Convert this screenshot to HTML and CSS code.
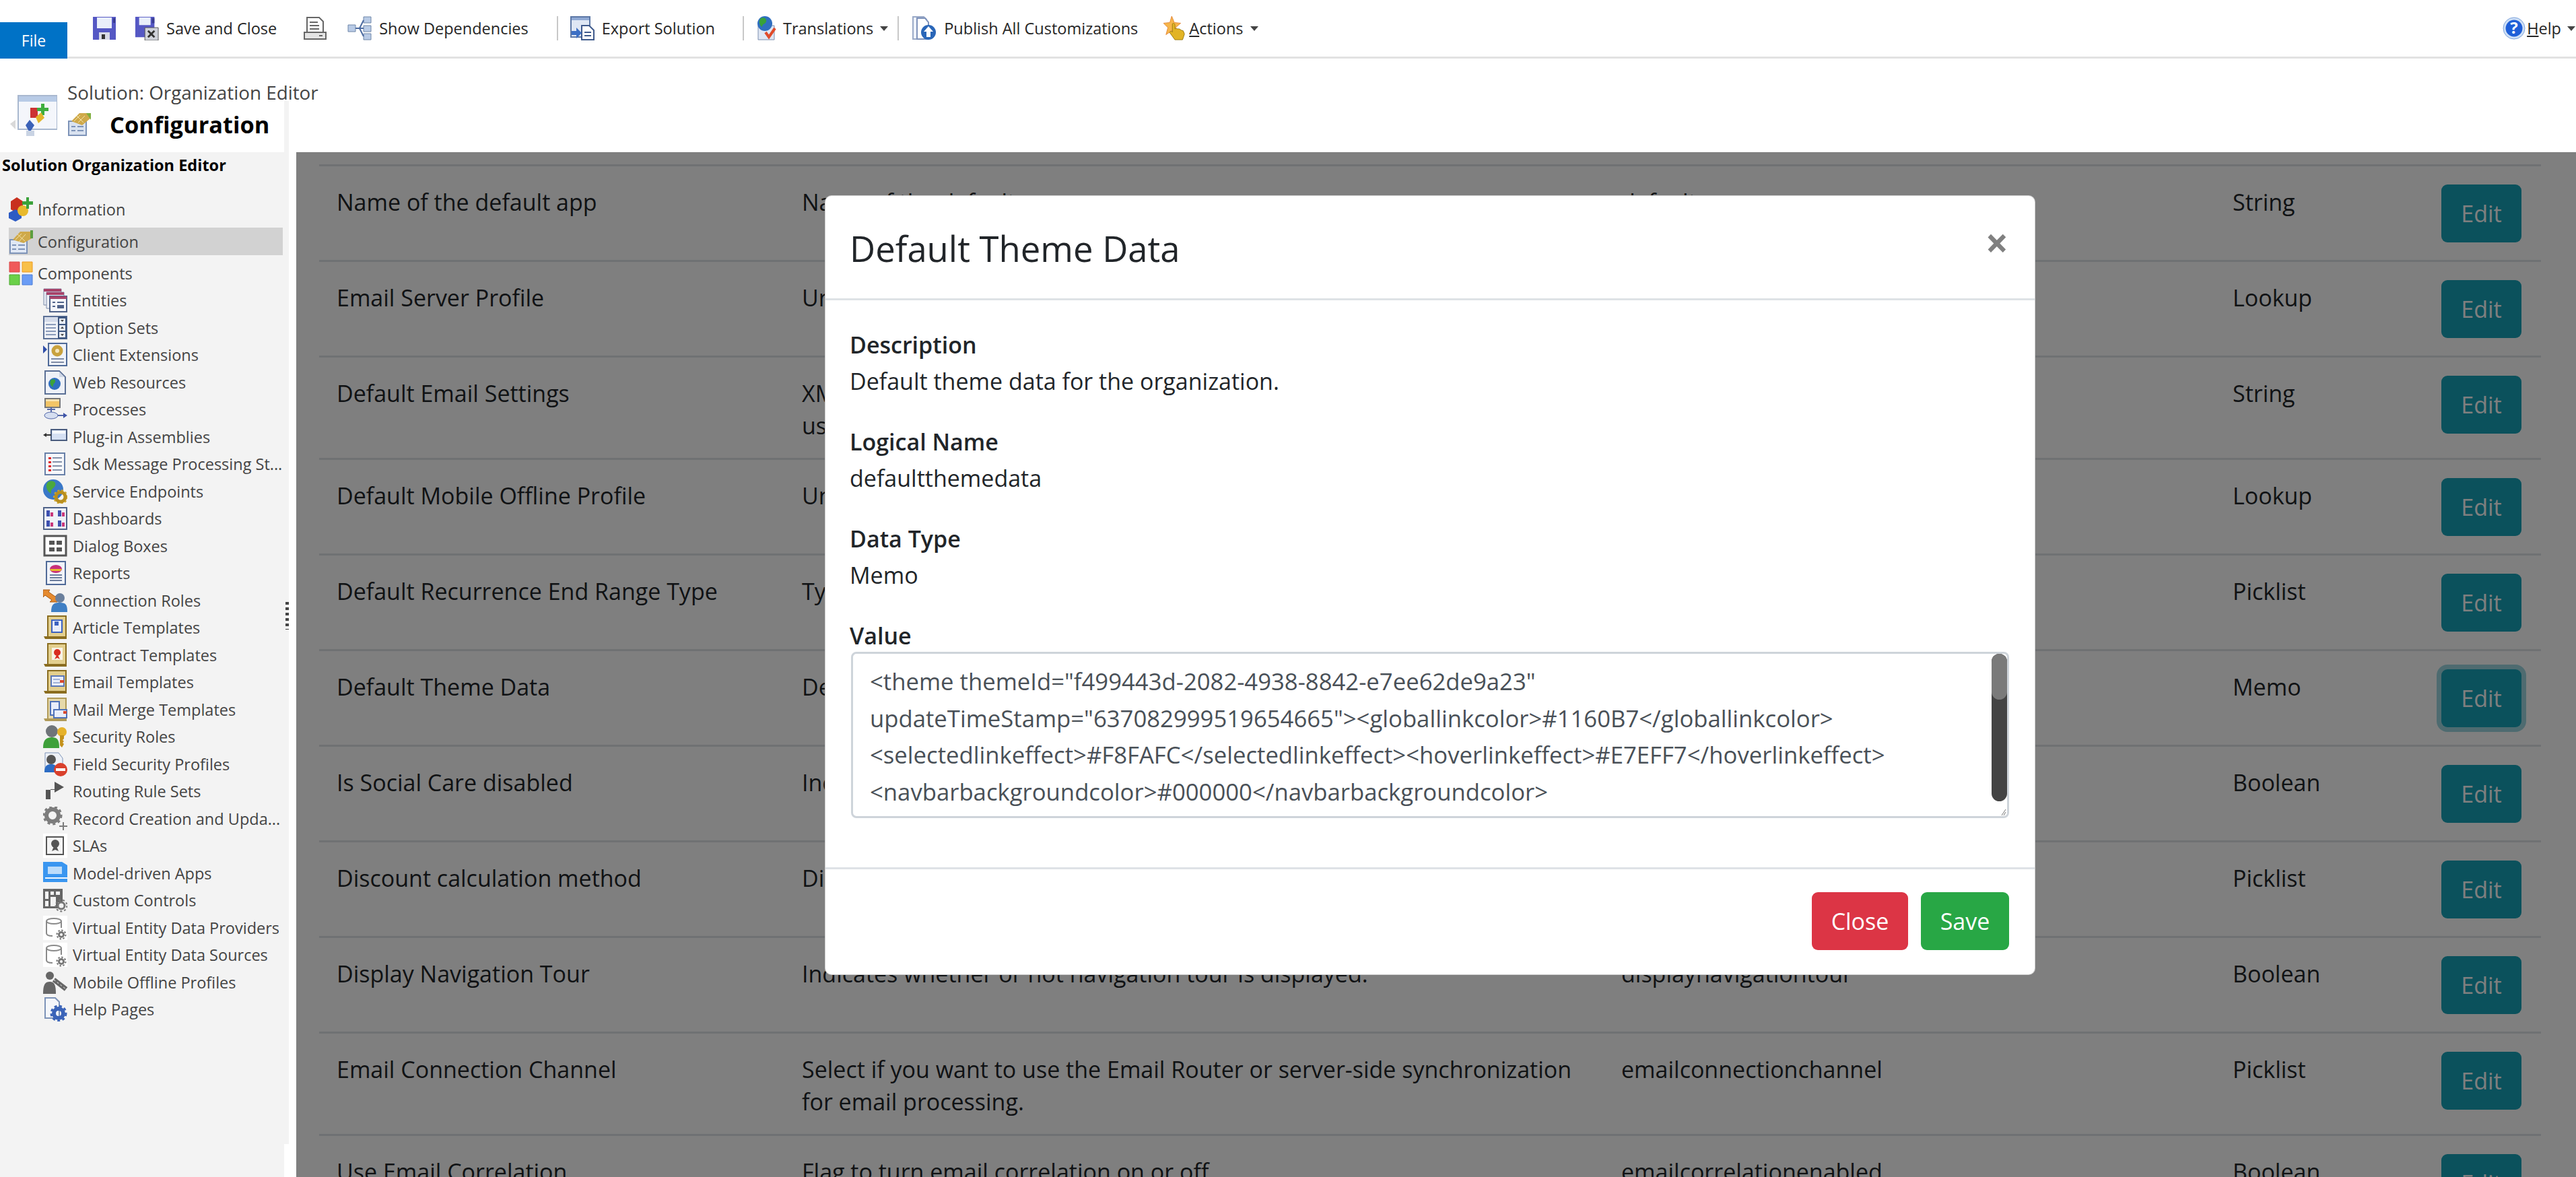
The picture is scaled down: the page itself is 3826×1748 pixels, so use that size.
FILE: index.html
```html
<!DOCTYPE html>
<html lang="en">
<head>
<meta charset="utf-8">
<title>Solution: Organization Editor</title>
<link rel="stylesheet" href="styles.css">
</head>
<body>
<header class="ribbon">
  <div class="file-tab">File</div>
  <svg class="ic ml-save" viewBox="0 0 36 36"><path fill="#5558c4" d="M1 1h34v34H1z"/><path fill="#e9effa" d="M7 2h22v16H7z"/><path fill="#3a3d90" d="M31 3h3v7h-3z"/><path fill="#d8dbe8" d="M10 24h16v11H10z"/><path fill="#333" d="M14 27h5v7h-5z"/></svg>
  <span class="rb-group ml-saveclose"><svg class="ic" viewBox="0 0 36 38"><path fill="#5558c4" d="M0 1h30v32H0z"/><path fill="#e9effa" d="M6 2h18v12H6z"/><path fill="#3a3d90" d="M26 3h4v8h-4z"/><path fill="#cfd2da" stroke="#555" d="M15 18h21v20H15z"/><path stroke="#333" stroke-width="3" d="M20 23l10 10M30 23L20 33"/></svg><span class="rb-text">Save and Close</span></span>
  <svg class="ic ml-print" viewBox="0 0 36 36"><path fill="#fff" stroke="#666" stroke-width="2" d="M6 2h18l6 6v18H6z"/><path stroke="#666" stroke-width="2" d="M10 9h12M10 14h14M10 19h14"/><path fill="#e4e4e4" stroke="#666" stroke-width="2" d="M2 24h32v10H2z"/><path fill="#666" d="M24 28h5v2h-5z"/></svg>
  <span class="rb-group ml-dep"><svg class="ic" viewBox="0 0 36 36"><path fill="#b9cbe6" stroke="#6e86a8" d="M1 13h11v10H1zM24 1h11v9H24zM24 14h11v9H24zM24 26h11v9H24z"/><path stroke="#4b6aa0" stroke-width="2" fill="none" d="M12 18h12M18 18l6-12M18 18l6 12"/></svg><span class="rb-text">Show Dependencies</span></span>
  <i class="rb-sep ml-sep1"></i>
  <span class="rb-group ml-export"><svg class="ic" viewBox="0 0 36 36"><path fill="#dfe7f4" stroke="#5d78a6" stroke-width="2" d="M1 1h28v30H1z"/><path fill="#8fa9d4" d="M2 2h26v4H2z"/><path fill="#fff" stroke="#3f5a8c" stroke-width="2" d="M17 14h11l7 7v14H17z"/><path stroke="#3f5a8c" stroke-width="2" d="M21 24h10M21 29h10"/><path fill="#3c6fc4" d="M2 22h7v-5l8 8-8 8v-5H2z"/></svg><span class="rb-text">Export Solution</span></span>
  <i class="rb-sep ml-sep2"></i>
  <span class="rb-group ml-trans"><svg class="ic" viewBox="0 0 36 36"><path fill="#dfe6f3" stroke="#7d8fb0" d="M5 14h24v21H5z"/><circle cx="15" cy="11" r="11" fill="#2f6fc0"/><path fill="#38a23a" d="M9 3c5-2 9 1 8 5s-6 3-6 8c-4-2-6-9-2-13z"/><path stroke="#e04b2a" stroke-width="4" fill="none" d="M16 24l5 7 9-13"/></svg><span class="rb-text">Translations</span><i class="caret"></i></span>
  <i class="rb-sep ml-sep3"></i>
  <span class="rb-group ml-publish"><svg class="ic" viewBox="0 0 36 36"><path fill="#eef2fa" stroke="#9aaac8" stroke-width="2" d="M1 1h16l4 4v29H1z"/><path fill="#fff" stroke="#7f93bb" stroke-width="2" d="M7 3h12l5 6v25H7z"/><circle cx="24" cy="24" r="11" fill="#2a66b8"/><path fill="#fff" d="M24 15l7 8h-4v8h-6v-8h-4z"/></svg><span class="rb-text">Publish All Customizations</span></span>
  <span class="rb-group ml-actions"><svg class="ic" viewBox="0 0 38 38"><path fill="#f6b64a" stroke="#e3873a" d="M13 0l4 10 10 1-8 7 3 11-9-6-9 6 3-11-7-7 10-1z"/><path fill="#e2b424" stroke="#9a7a10" d="M14 12c2-2 4 0 4 2v6l2-1 2 1 3 0 3 2 3 1 2 5-3 9H18l-8-11c0-3 3-3 4-1z"/></svg><span class="rb-text"><u>A</u>ctions</span><i class="caret"></i></span>
  <span class="rb-group ml-help"><svg class="ic" viewBox="0 0 34 36"><circle cx="17" cy="18" r="16" fill="#cfe0f6" stroke="#7ea4dc"/><circle cx="17" cy="18" r="12.500" fill="#1f5fd8"/><text class="help-q" x="17" y="26" text-anchor="middle">?</text></svg><span class="rb-text"><u>H</u>elp</span><i class="caret"></i></span>
</header>

<div class="titlebar">
  <svg class="big-icon" viewBox="0 0 70 62"><path fill="#d9d9d9" d="M0 44l8-6v14z"/><path fill="#f4f6fb" stroke="#a9b8cf" stroke-width="2" d="M12 2h58v50H12z"/><path fill="#b8cbe6" d="M13 3h56v8H13z"/><path fill="#c33" d="M30 20h11v15H30z"/><path fill="#3fae3f" d="M46 14h5v6h6v5h-6v6h-5v-6h-6v-5h6z"/><path fill="#e3b62a" d="M38 34l8-7 5 8-9 8z"/><path fill="#3b62b8" d="M29 38l7 8-7 11-6-11z"/><path fill="#c9d3e3" d="M24 54h12v8H24z"/></svg>
  <div class="title-text">
    <div class="solution-name">Solution: Organization Editor</div>
    <div class="page-name"><svg class="page-icon" viewBox="0 0 36 36"><path fill="#d9e2f0" stroke="#7d93b8" stroke-width="2" d="M2 14h26v21H2z"/><path stroke="#7d93b8" stroke-width="2" d="M6 22h6M15 22h9M6 28h6M15 28h9"/><path fill="#cfa94a" d="M6 14L18 2h16v8l-12 10z"/><path fill="#7fae3f" d="M28 2h7v10z"/><path stroke="#f3e2a8" d="M10 14l9-9M16 16l10-10M14 6l10 10"/></svg><span>Configuration</span></div>
  </div>
</div>

<div class="panes">
  <nav class="sidebar">
    <div class="side-title">Solution Organization Editor</div>
    <ul class="nav-top">
      <li class="top-item"><svg class="ic" viewBox="0 0 36 36"><path fill="#c8301e" d="M3 6l9-6 9 6v12l-9 5-9-5z"/><path fill="#2c5bc4" d="M0 23l10-5 9 5v8l-9 5-10-5z"/><circle cx="21" cy="20" r="8" fill="#e8b92c"/><path fill="#3ba23a" d="M26 0h4v6h6v5h-6v6h-4v-6h-6V6h6z"/></svg><span>Information</span></li>
      <li class="top-item selected"><svg class="ic" viewBox="0 0 36 36"><path fill="#dfe7f4" stroke="#7d93b8" stroke-width="2" d="M2 15h25v20H2z"/><path stroke="#7d93b8" stroke-width="2" d="M5 23h6M14 23h10M5 29h6M14 29h10"/><path fill="#cfa94a" d="M6 15L17 3h19v9l-14 8z"/><path fill="#5d9e3f" d="M32 1h4v12h-4z"/><path stroke="#f3e2a8" d="M10 15l9-9M15 18l10-11M13 7l11 10"/></svg><span>Configuration</span></li>
      <li class="top-item"><svg class="ic" viewBox="0 0 36 36"><path fill="#f05a5a" stroke="#d84848" d="M1 1h15v15H1z"/><path fill="#f8c04a" stroke="#ee9b20" d="M20 1h15v15H20z"/><path fill="#6ad048" stroke="#4ca832" d="M1 20h15v15H1z"/><path fill="#6a9cf5" stroke="#4a7ed8" d="M20 20h15v15H20z"/></svg><span>Components</span></li>
    </ul>
    <ul class="nav-sub">
      <li><svg class="ic" viewBox="0 0 36 36"><path fill="#e8ecf4" stroke="#7a8aa8" d="M1 1h26v24H1z"/><path fill="#a8436a" d="M1 1h26v4H1z"/><path fill="#eef1f7" stroke="#7a8aa8" d="M5 6h26v24H5z"/><path fill="#a8436a" d="M5 6h26v4H5z"/><path fill="#f4f6fa" stroke="#4f6288" stroke-width="2" d="M10 12h25v23H10z"/><path fill="#a8436a" d="M10 12h25v4H10z"/><path fill="#4f6288" d="M14 20h4v2h-4zM14 26h4v2h-4zM21 25h10v5H21zM21 20h10v2H21z"/></svg><span>Entities</span></li>
      <li><svg class="ic" viewBox="0 0 36 36"><path fill="#eef1f7" stroke="#5b7096" stroke-width="2" d="M1 1h34v33H1z"/><path fill="#d5dcea" d="M2 2h20v7H2z"/><path fill="#3d5680" d="M22 1h13v33H22z"/><path stroke="#8a9bba" stroke-width="2" d="M4 13h15M4 18h15M4 23h15M4 28h15"/><path fill="#e9edf4" d="M24 4h9v8h-9zM24 14h9v8h-9zM24 24h9v8h-9z"/><path fill="#444" d="M26 6h5l-2.500 3zM26 19h5l-2.500-3zM26 27h5l-2.500 3z"/></svg><span>Option Sets</span></li>
      <li><svg class="ic" viewBox="0 0 36 36"><path fill="#2f4ea8" d="M0 4l6 6-6 6z"/><path fill="#f0f3f9" stroke="#4f6a98" stroke-width="2" d="M8 1h27v33H8z"/><circle cx="21" cy="12" r="8.500" fill="#c9a23e"/><circle cx="21" cy="12" r="3" fill="#f4e6bc"/><path stroke="#7f8ca6" stroke-width="2" d="M12 24h19M12 29h19"/></svg><span>Client Extensions</span></li>
      <li><svg class="ic" viewBox="0 0 36 36"><path fill="#eef1f7" stroke="#5b7096" stroke-width="2" d="M3 1h21l9 9v25H3z"/><path fill="#cfd7e6" d="M24 2v8h8z"/><circle cx="17" cy="20" r="9" fill="#2f6fc0"/><path fill="#3ba23a" d="M12 14c4-2 7 0 6 3s-4 3-3 8c-4-2-6-7-3-11z"/></svg><span>Web Resources</span></li>
      <li><svg class="ic" viewBox="0 0 36 36"><path fill="#f3c566" stroke="#777" stroke-width="2" d="M3 2h22v13H3z"/><path fill="#f8e3b0" d="M4 3h20v3H4z"/><path stroke="#5468a8" stroke-width="2" fill="none" d="M12 15v11M6 18h12M22 27h12"/><ellipse cx="12" cy="27" rx="10" ry="5" fill="#d5def0" stroke="#5468a8"/><path fill="#3f55a8" d="M30 23l6 4-6 4z"/></svg><span>Processes</span></li>
      <li><svg class="ic" viewBox="0 0 36 36"><path fill="#d5e0f3" stroke="#4a5c7e" stroke-width="2" d="M12 7h23v16H12z"/><path fill="#f5f8fd" d="M14 9h19v4H14z"/><path stroke="#333" stroke-width="2" d="M2 15h10"/><path fill="#333" d="M0 15l5-3v6z"/></svg><span>Plug-in Assemblies</span></li>
      <li><svg class="ic" viewBox="0 0 36 36"><path fill="#f5f7fb" stroke="#6880a8" stroke-width="2" d="M3 2h29v32H3z"/><path stroke="#8592aa" stroke-width="2" d="M14 9h14M14 15h14M14 21h14M14 27h14"/><path fill="#e0282a" d="M8 8h4v3H8zM8 14h4v3H8zM8 20h4v3H8zM8 26h4v3H8z"/></svg><span>Sdk Message Processing St...</span></li>
      <li><svg class="ic" viewBox="0 0 36 36"><circle cx="15" cy="15" r="15" fill="#3a78c8"/><path fill="#4ba83e" d="M7 4c7-4 13 0 11 5s-7 4-6 12C7 19 2 10 7 4z"/><circle cx="26" cy="26" r="7" fill="none" stroke="#b98f1e" stroke-width="5"/><circle cx="26" cy="26" r="10" fill="none" stroke="#cfa62e" stroke-width="2" stroke-dasharray="3 3"/></svg><span>Service Endpoints</span></li>
      <li><svg class="ic" viewBox="0 0 36 36"><path fill="#eef1f7" stroke="#4f6288" stroke-width="2" d="M1 2h34v32H1z"/><path fill="#3e50b0" d="M5 6h5v9H5zM22 6h5v9h-5zM5 21h5v9H5zM22 21h5v9h-5z"/><path fill="#c8367a" d="M11 9h4v6h-4zM28 9h4v6h-4zM11 24h4v6h-4zM28 24h4v6h-4z"/></svg><span>Dashboards</span></li>
      <li><svg class="ic" viewBox="0 0 36 36"><path fill="#fff" stroke="#555" stroke-width="3" d="M2 3h32v29H2z"/><path fill="#555" d="M9 10h8v6H9zM20 10h8v6h-8zM9 20h8v6H9zM20 20h8v6h-8z"/></svg><span>Dialog Boxes</span></li>
      <li><svg class="ic" viewBox="0 0 36 36"><path fill="#f0f3f9" stroke="#4f6a98" stroke-width="2" d="M5 1h28v34H5z"/><ellipse cx="19" cy="12" rx="9" ry="6" fill="#c8307a"/><path fill="#e8b92c" d="M10 12h18l-2 3H12z"/><path stroke="#6c7d9c" stroke-width="2" d="M10 21h18M10 25h18M10 29h18"/></svg><span>Reports</span></li>
      <li><svg class="ic" viewBox="0 0 36 36"><path fill="#e58a2e" stroke="#a85a14" d="M0 2h10l-2 3 10 7 3-3v11H10l3-3L3 10l-3 3z"/><circle cx="25" cy="14" r="7" fill="#6a7f9c"/><path fill="#3f7fc4" d="M12 35c0-12 4-14 13-14s11 3 11 14z"/></svg><span>Connection Roles</span></li>
      <li><svg class="ic" viewBox="0 0 36 36"><path fill="#e3cf8e" stroke="#8a6d20" stroke-width="2" d="M7 1h27v33H7z"/><path fill="#8a6d20" d="M1 31h33v4H3z"/><path fill="#e9eefa" stroke="#3c62c0" stroke-width="2" d="M13 7h15v18H13z"/><path fill="#3c62c0" d="M17 9h6v6h-6z"/></svg><span>Article Templates</span></li>
      <li><svg class="ic" viewBox="0 0 36 36"><path fill="#e3cf8e" stroke="#8a6d20" stroke-width="2" d="M7 1h27v33H7z"/><path fill="#8a6d20" d="M1 31h33v4H3z"/><path fill="#f7f3e6" d="M13 7h16v18H13z"/><circle cx="21" cy="14" r="5" fill="#d92c20"/><path fill="#d92c20" d="M17 24l3-6h2l3 6-4-2z"/></svg><span>Contract Templates</span></li>
      <li><svg class="ic" viewBox="0 0 36 36"><path fill="#e3cf8e" stroke="#8a6d20" stroke-width="2" d="M7 1h27v33H7z"/><path fill="#8a6d20" d="M1 31h33v4H3z"/><path fill="#e9eefa" stroke="#5b78b8" stroke-width="2" d="M12 9h19v15H12z"/><path stroke="#5b78b8" d="M15 14h10M15 19h10"/><path fill="#d94a30" d="M25 15h6v4h-6z"/></svg><span>Email Templates</span></li>
      <li><svg class="ic" viewBox="0 0 36 36"><path fill="#e6d9aa" stroke="#b09a58" stroke-width="2" d="M7 1h27v33H7z"/><path fill="#b09a58" d="M1 31h33v4H3z"/><path fill="#e9eefa" stroke="#4f72b8" stroke-width="2" d="M11 6h13v20H11z"/><path fill="#e9eefa" stroke="#4f72b8" stroke-width="2" d="M16 18h19v12H16z"/><path fill="#d94a30" d="M30 20h5v4h-5z"/></svg><span>Mail Merge Templates</span></li>
      <li><svg class="ic" viewBox="0 0 36 36"><circle cx="13" cy="10" r="9" fill="#6f7479"/><path fill="#3ea03a" d="M0 35c0-13 5-16 13-16s11 3 11 16z"/><circle cx="28" cy="11" r="7" fill="#e6b22a"/><path fill="#c4911a" d="M25 16h6v5l-2 2 2 2-2 2 2 2-3 5-3-3z"/></svg><span>Security Roles</span></li>
      <li><svg class="ic" viewBox="0 0 36 36"><path fill="#eef1f7" stroke="#7d93b8" d="M3 1h20l6 8v20H3z"/><circle cx="12" cy="11" r="7" fill="#555"/><path fill="#2c6cc4" d="M2 30c0-10 4-12 10-12s9 2 9 12z"/><circle cx="26" cy="26" r="10" fill="#d9402c"/><path fill="#fff" d="M19 24h14v4H19z"/></svg><span>Field Security Profiles</span></li>
      <li><svg class="ic" viewBox="0 0 36 36"><path fill="#555" d="M4 30V16h13V4l14 8-14 8v-5H11v15H4z"/></svg><span>Routing Rule Sets</span></li>
      <li><svg class="ic" viewBox="0 0 36 36"><circle cx="14" cy="13" r="9" fill="none" stroke="#7c7c7c" stroke-width="6"/><circle cx="14" cy="13" r="13" fill="none" stroke="#7c7c7c" stroke-width="3" stroke-dasharray="4 4"/><path fill="#7c7c7c" d="M29 23h2v5h5v2h-5v5h-2v-5h-5v-2h5z"/></svg><span>Record Creation and Upda...</span></li>
      <li><svg class="ic" viewBox="0 0 36 36"><path fill="#fff" d="M0 0h36v36H0z"/><path fill="#f4f4f4" stroke="#555" stroke-width="2" d="M5 5h25v26H5z"/><circle cx="18" cy="15" r="6" fill="#555"/><path fill="#555" d="M13 26l3-7h4l3 7-5-2z"/></svg><span>SLAs</span></li>
      <li><svg class="ic" viewBox="0 0 36 36"><path fill="#3a96f0" d="M0 1h28l8 5v25H0z"/><path fill="#bcdcfa" d="M7 8h21v11H7z"/><path fill="#f2f8fe" d="M3 24h33v2H3z"/></svg><span>Model-driven Apps</span></li>
      <li><svg class="ic" viewBox="0 0 36 36"><path fill="#666" d="M0 1h29v20h-7v9H0z"/><path fill="#f3f3f3" d="M3 5h5v11H3zM11 5h5v5h-5zM11 13h8v14h-8zM3 19h5v8H3zM19 5h6v5h-6z"/><circle cx="27" cy="26" r="5" fill="#f3f3f3" stroke="#777" stroke-width="3"/><circle cx="27" cy="26" r="8.500" fill="none" stroke="#777" stroke-width="2" stroke-dasharray="3 3"/></svg><span>Custom Controls</span></li>
      <li><svg class="ic" viewBox="0 0 36 36"><path fill="#fff" d="M0 0h36v36H0z"/><path fill="none" stroke="#8a8a8a" stroke-width="2" d="M5 8v18c0 3 5 4 9 4M27 8v10"/><ellipse cx="16" cy="8" rx="11" ry="4" fill="none" stroke="#8a8a8a" stroke-width="2"/><circle cx="27" cy="28" r="3.500" fill="#fff" stroke="#777" stroke-width="3"/><circle cx="27" cy="28" r="6.500" fill="none" stroke="#777" stroke-width="2" stroke-dasharray="2.500 2.500"/></svg><span>Virtual Entity Data Providers</span></li>
      <li><svg class="ic" viewBox="0 0 36 36"><path fill="#fff" d="M0 0h36v36H0z"/><path fill="none" stroke="#8a8a8a" stroke-width="2" d="M5 8v18c0 3 5 4 9 4M27 8v10"/><ellipse cx="16" cy="8" rx="11" ry="4" fill="none" stroke="#8a8a8a" stroke-width="2"/><circle cx="27" cy="28" r="3.500" fill="#fff" stroke="#777" stroke-width="3"/><circle cx="27" cy="28" r="6.500" fill="none" stroke="#777" stroke-width="2" stroke-dasharray="2.500 2.500"/></svg><span>Virtual Entity Data Sources</span></li>
      <li><svg class="ic" viewBox="0 0 36 36"><circle cx="10" cy="8" r="6" fill="#666"/><path fill="#666" d="M0 35c0-14 3-18 10-18s9 5 9 18z"/><path stroke="#666" stroke-width="7" d="M16 14l18 14"/><path stroke="#f3f3f3" stroke-dasharray="3 3" d="M16 14l18 14"/></svg><span>Mobile Offline Profiles</span></li>
      <li><svg class="ic" viewBox="0 0 36 36"><path fill="#f4f6fa" stroke="#7d93b8" stroke-width="2" d="M3 1h15l6 6v24H3z"/><circle cx="23" cy="24" r="7" fill="none" stroke="#3a63b8" stroke-width="6"/><circle cx="23" cy="24" r="11" fill="none" stroke="#3a63b8" stroke-width="3" stroke-dasharray="4 3.500"/></svg><span>Help Pages</span></li>
    </ul>
    <i class="splitter"></i>
  </nav>

  <main class="content">
    <table class="attrs">
      <colgroup><col class="c1"><col class="c2"><col class="c3"><col class="c4"><col class="c5"></colgroup>
      <tbody>
        <tr><td>Name of the default app</td><td>Name of the default app.</td><td>defaultcrmapp</td><td>String</td><td><button class="btn edit">Edit</button></td></tr>
        <tr><td>Email Server Profile</td><td>Unique identifier of the email server profile.</td><td>defaultemailserverprofileid</td><td>Lookup</td><td><button class="btn edit">Edit</button></td></tr>
        <tr><td>Default Email Settings</td><td>XML string containing the default email settings that are applied when a<br>user or queue is created.</td><td>defaultemailsettings</td><td>String</td><td><button class="btn edit">Edit</button></td></tr>
        <tr><td>Default Mobile Offline Profile</td><td>Unique identifier of the default mobile offline profile.</td><td>defaultmobileofflineprofileid</td><td>Lookup</td><td><button class="btn edit">Edit</button></td></tr>
        <tr><td>Default Recurrence End Range Type</td><td>Type of default recurrence end range date.</td><td>defaultrecurrenceendrangetype</td><td>Picklist</td><td><button class="btn edit">Edit</button></td></tr>
        <tr><td>Default Theme Data</td><td>Default theme data for the organization.</td><td>defaultthemedata</td><td>Memo</td><td><button class="btn edit focused">Edit</button></td></tr>
        <tr><td>Is Social Care disabled</td><td>Indicates whether Social Care is disabled.</td><td>disablesocialcare</td><td>Boolean</td><td><button class="btn edit">Edit</button></td></tr>
        <tr><td>Discount calculation method</td><td>Discount calculation method for the QOOI product.</td><td>discountcalculationmethod</td><td>Picklist</td><td><button class="btn edit">Edit</button></td></tr>
        <tr><td>Display Navigation Tour</td><td>Indicates whether or not navigation tour is displayed.</td><td>displaynavigationtour</td><td>Boolean</td><td><button class="btn edit">Edit</button></td></tr>
        <tr><td>Email Connection Channel</td><td>Select if you want to use the Email Router or server-side synchronization for email processing.</td><td>emailconnectionchannel</td><td>Picklist</td><td><button class="btn edit">Edit</button></td></tr>
        <tr><td>Use Email Correlation</td><td>Flag to turn email correlation on or off.</td><td>emailcorrelationenabled</td><td>Boolean</td><td><button class="btn edit">Edit</button></td></tr>
      </tbody>
    </table>
    <div class="backdrop">
      <section class="modal">
        <header class="modal-head">
          <h5 class="modal-title">Default Theme Data</h5>
          <button class="modal-x">×</button>
        </header>
        <div class="modal-body">
          <div class="field"><div class="f-label">Description</div><div class="f-value">Default theme data for the organization.</div></div>
          <div class="field"><div class="f-label">Logical Name</div><div class="f-value">defaultthemedata</div></div>
          <div class="field"><div class="f-label">Data Type</div><div class="f-value">Memo</div></div>
          <div class="f-label">Value</div>
          <div class="textarea">
            <span class="ta-line">&lt;theme themeId="f499443d-2082-4938-8842-e7ee62de9a23"</span>
            <span class="ta-line">updateTimeStamp="637082999519654665"&gt;&lt;globallinkcolor&gt;#1160B7&lt;/globallinkcolor&gt;</span>
            <span class="ta-line">&lt;selectedlinkeffect&gt;#F8FAFC&lt;/selectedlinkeffect&gt;&lt;hoverlinkeffect&gt;#E7EFF7&lt;/hoverlinkeffect&gt;</span>
            <span class="ta-line">&lt;navbarbackgroundcolor&gt;#000000&lt;/navbarbackgroundcolor&gt;</span>
            <i class="ta-track"><i class="ta-thumb"></i></i>
            <svg class="ta-grip" viewBox="0 0 23 22"><path fill="none" stroke="#777" d="M15 21l6-9M18 21l3-5"/></svg>
          </div>
        </div>
        <footer class="modal-foot">
          <button class="btn danger">Close</button>
          <button class="btn success">Save</button>
        </footer>
      </section>
    </div>
  </main>
</div>
</body>
</html>
```

FILE: styles.css
```css
* { box-sizing: border-box; }
html, body { margin: 0; height: 100%; }
body {
  width: 3826px;
  height: 1748px;
  overflow: hidden;
  background: #fff;
  font-family: "Open Sans", "Noto Sans", sans-serif;
  color: #212529;
  display: flex;
  flex-direction: column;
}
ul { list-style: none; margin: 0; padding: 0; }
i { display: block; font-style: normal; }
svg { display: block; flex: none; }
.ic { width: 36px; height: 36px; }

/* Ribbon */
.ribbon {
  height: 87px;
  flex: none;
  display: flex;
  align-items: center;
  border-bottom: 3px solid #e2e2e2;
  font-size: 23.5px;
  color: #262626;
  position: relative;
}
.file-tab {
  align-self: flex-end;
  width: 100px;
  height: 54px;
  margin-bottom: -3px;
  background: #0072c6;
  color: #fff;
  display: flex;
  align-items: center;
  justify-content: center;
  font-size: 23px;
}
.rb-group { display: flex; align-items: center; }
.rb-text { margin-left: 11px; white-space: nowrap; }
.caret { width: 0; height: 0; border: 6px solid transparent; border-top: 7px solid #444; border-bottom: 0; margin-left: 10px; }
.rb-sep { width: 2px; height: 36px; background: #c8c8c8; }
.ml-save { margin-left: 37px; }
.ml-saveclose { margin-left: 27px; }
.ml-print { margin-left: 39px; }
.ml-dep { margin-left: 30px; }
.ml-sep1 { margin-left: 42px; }
.ml-export { margin-left: 18px; }
.ml-sep2 { margin-left: 41px; }
.ml-trans { margin-left: 16px; }
.ml-trans .rb-text { margin-left: 6px; }
.ml-sep3 { margin-left: 14px; }
.ml-publish { margin-left: 20px; }
.ml-actions { margin-left: 38px; }
.ml-actions .rb-text { margin-left: 2px; }
.ml-help { margin-left: auto; margin-right: 1px; }
.ml-help .ic { width: 34px; }
.ml-help .rb-text { margin-left: 2px; }
.ml-help .caret { margin-left: 9px; }
.help-q { font: bold 24px "Open Sans", sans-serif; fill: #fff; }

/* Title */
.titlebar {
  height: 139px;
  flex: none;
  display: flex;
  position: relative;
  padding: 51px 0 0 15px;
}
.titlebar::after {
  content: "";
  position: absolute;
  left: 422px;
  top: 63px;
  width: 7px;
  height: 76px;
  background: #f3f3f3;
}
.big-icon { width: 70px; height: 62px; margin-top: 2px; }
.title-text { margin-left: 15px; margin-top: -21px; position: relative; z-index: 1; }
.solution-name { font-size: 27.8px; line-height: 40px; color: #444; white-space: nowrap; }
.page-name { display: flex; align-items: center; font-size: 34.4px; font-weight: 700; color: #000; height: 54px; }
.page-icon { width: 36px; height: 36px; margin-right: 27px; }

/* Panes */
.panes { flex: 1; display: flex; min-height: 0; }
.sidebar {
  width: 429px;
  flex: none;
  background: #f3f3f3;
  position: relative;
  font-size: 23.5px;
  color: #444;
}
.sidebar::after {
  content: "";
  position: absolute;
  right: 0;
  bottom: 0;
  width: 7px;
  height: 49px;
  background: #fff;
}
.side-title { font-size: 23.5px; font-weight: 700; color: #000; height: 40px; line-height: 38px; padding-left: 3px; white-space: nowrap; }
.nav-top { margin-top: 25px; }
.top-item { display: flex; align-items: center; gap: 7px; height: 40px; margin: 0 9px 0 13px; }
.top-item.selected { height: 41px; margin-top: 7px; margin-bottom: 7px; background: #d2d2d2; }
.nav-sub { margin-top: 0; }
.nav-sub li { display: flex; align-items: center; gap: 8px; height: 40.5px; padding-left: 64px; white-space: nowrap; }
.splitter { position: absolute; right: 0; top: 668px; width: 5px; height: 41px; background: repeating-linear-gradient(#444 0 4px, transparent 4px 8px); }

/* Table */
.content { flex: 1; position: relative; margin-left: 11px; padding: 18px 0 0 34px; overflow: hidden; font-size: 34px; line-height: 48px; }
.attrs { border-collapse: collapse; table-layout: fixed; width: 3300px; }
.c1 { width: 691px; }
.c2 { width: 1215px; }
.c3 { width: 910px; }
.c4 { width: 310px; }
.c5 { width: 174px; }
.attrs td { border-top: 3px solid #dee2e6; padding: 29px 28px 24px 26px; vertical-align: top; }
.attrs td:nth-child(3) { padding-left: 28px; }
.attrs td:last-child { padding-top: 27px; padding-bottom: 26px; }
.btn {
  font: inherit;
  border: 0;
  border-radius: 9px;
  color: #fff;
  height: 86px;
  padding: 0;
  display: flex;
  align-items: center;
  justify-content: center;
}
.edit { width: 119px; background: #17a2b8; }
.edit.focused { box-shadow: 0 0 0 7px rgba(58, 176, 195, .5); }

/* Modal */
.backdrop { position: absolute; inset: 0; background: rgba(0, 0, 0, .5); }
.modal {
  position: absolute;
  left: 785px;
  top: 64px;
  width: 1798px;
  height: 1158px;
  background: #fff;
  border: 1px solid rgba(0, 0, 0, .2);
  border-radius: 10px;
  display: flex;
  flex-direction: column;
}
.modal-head {
  height: 155px;
  flex: none;
  display: flex;
  align-items: flex-start;
  justify-content: space-between;
  padding: 0 38px 0 36px;
  border-bottom: 3px solid #dee2e6;
}
.modal-title { margin: 46px 0 0; font-size: 52.6px; line-height: 64px; font-weight: 500; }
.modal-x { border: 0; background: none; padding: 0; color: #808080; font: 700 60px/60px "Open Sans", sans-serif; margin: 39px 1px 0 0; }
.modal-body { flex: 1; padding: 42px 38px 0 36px; }
.field { margin-bottom: 42px; }
.f-label { font-weight: 600; height: 48px; }
.f-value { margin-top: 6px; height: 48px; }
.textarea {
  position: relative;
  height: 247px;
  margin-left: 2px;
  border: 3px solid #ced4da;
  border-radius: 8px;
  padding: 14px 0 0 25px;
  color: #495057;
  font-size: 34.7px;
  line-height: 54.500px;
  overflow: hidden;
}
.ta-line { display: block; white-space: nowrap; }
.ta-track { position: absolute; right: 0; top: 0; width: 23px; height: 219px; background: #444; border-radius: 12px; }
.ta-thumb { width: 23px; height: 68px; background: #7a7a7a; border-radius: 12px; }
.ta-grip { position: absolute; right: 0; top: 219px; width: 23px; height: 22px; background: #fff; }
.modal-foot {
  height: 159px;
  flex: none;
  border-top: 3px solid #dee2e6;
  display: flex;
  justify-content: flex-end;
  gap: 19px;
  padding: 34px 38px 0;
}
.danger { width: 143px; background: #dc3545; }
.success { width: 131px; background: #28a745; }
```
